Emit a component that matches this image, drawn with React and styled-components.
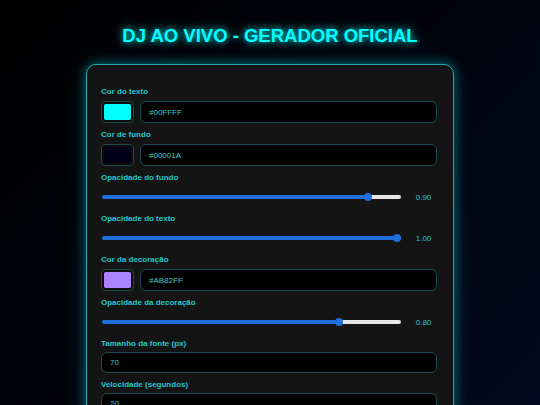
import styled, { createGlobalStyle } from 'styled-components';
import { useState } from 'react';

const GlobalStyle = createGlobalStyle`
  html, body {
    margin:0;
    padding:0;
  }
  body {
    font-family:"Liberation Sans", Arial, sans-serif;
    background:linear-gradient(135deg, #000000 0%, #01030c 45%, #000a22 100%);
    min-height:100vh;
    overflow:hidden;
  }
`
const Page = styled.div`
  min-height:405px;
  padding-top:25px;
`
const Title = styled.h1`
  margin:0 0 17px;
  text-align:center;
  font-size:18.5px;
  line-height:22px;
  font-weight:bold;
  color:#00ffff;
  text-shadow:0 0 6px rgba(0,255,255,0.8), 0 0 14px rgba(0,255,255,0.45);
`
const Panel = styled.div`
  box-sizing:border-box;
  width:368px;
  margin:0 auto;
  padding:22px 16px 20px 14px;
  background:#141414;
  border:1px solid #2aa7ae;
  border-radius:10px;
  box-shadow:0 0 12px rgba(0,220,230,0.45), 0 0 26px rgba(0,200,230,0.15);
`
const Field = styled.div`
  margin-bottom:7px;
`
const Label = styled.label`
  display:block;
  font-size:8px;
  line-height:10px;
  font-weight:bold;
  color:#22c6cc;
  margin-bottom:${p => p.$tight ? '3px' : '4px'};
`
const Row = styled.div`
  display:flex;
  align-items:center;
  gap:6px;
`
const Swatch = styled.div`
  box-sizing:border-box;
  width:33px;
  height:22px;
  padding:2px;
  border:1px solid #1d4a4d;
  border-radius:4px;
  background:#0a0a0a;
  & > div {
    width:100%;
    height:100%;
    border-radius:2px;
    background:${p => p.$color};
  }
`
const TextInput = styled.input`
  display:block;
  box-sizing:border-box;
  flex:1;
  width:100%;
  height:${p => p.$h || 22}px;
  margin:0;
  padding:0 8px;
  background:#000;
  border:1px solid #1b4d50;
  border-radius:6px;
  color:#3fc9cc;
  font-family:"Liberation Sans", Arial, sans-serif;
  font-size:8px;
  outline:none;
`
const SliderRow = styled.div`
  display:flex;
  align-items:center;
  height:20px;
  margin-bottom:1px;
`
const Range = styled.input`
  -webkit-appearance:none;
  appearance:none;
  flex:1;
  margin:0 0 0 1px;
  height:4px;
  border-radius:2px;
  outline:none;
  &::-webkit-slider-thumb {
    -webkit-appearance:none;
    width:8px;
    height:8px;
    border-radius:50%;
    background:#1f6fdc;
    border:none;
  }
`
const Value = styled.span`
  box-sizing:border-box;
  width:36px;
  padding-left:9px;
  text-align:center;
  font-size:8px;
  color:#22c6cc;
`

const ColorField = ({ label, value }) => (
  <Field>
    <Label>{label}</Label>
    <Row>
      <Swatch $color={value}><div /></Swatch>
      <TextInput defaultValue={value} />
    </Row>
  </Field>
)

const SliderField = ({ label, initial }) => {
  const [val, setVal] = useState(initial)
  const pct = val * 100
  return (
    <Field>
      <Label>{label}</Label>
      <SliderRow>
        <Range
          type="range" min="0" max="1" step="0.01" value={val}
          onChange={e => setVal(parseFloat(e.target.value))}
          style={{ background: `linear-gradient(to right, #1f6fdc 0%, #1f6fdc ${pct}%, #e6e6e6 ${pct}%, #e6e6e6 100%)` }}
        />
        <Value>{val.toFixed(2)}</Value>
      </SliderRow>
    </Field>
  )
}

const NumberField = ({ label, value }) => (
  <Field>
    <Label $tight>{label}</Label>
    <TextInput $h={21} defaultValue={value} />
  </Field>
)

function App() {
  return (
    <Page>
      <GlobalStyle />
      <Title>DJ AO VIVO - GERADOR OFICIAL</Title>
      <Panel>
        <ColorField label="Cor do texto" value="#00FFFF" />
        <ColorField label="Cor de fundo" value="#00001A" />
        <SliderField label="Opacidade do fundo" initial={0.9} />
        <SliderField label="Opacidade do texto" initial={1} />
        <ColorField label="Cor da decoração" value="#AB82FF" />
        <SliderField label="Opacidade da decoração" initial={0.8} />
        <NumberField label="Tamanho da fonte (px)" value="70" />
        <NumberField label="Velocidade (segundos)" value="20" />
        <NumberField label="Texto" value="DJ AO VIVO" />
      </Panel>
    </Page>
  );
}

export default App;
